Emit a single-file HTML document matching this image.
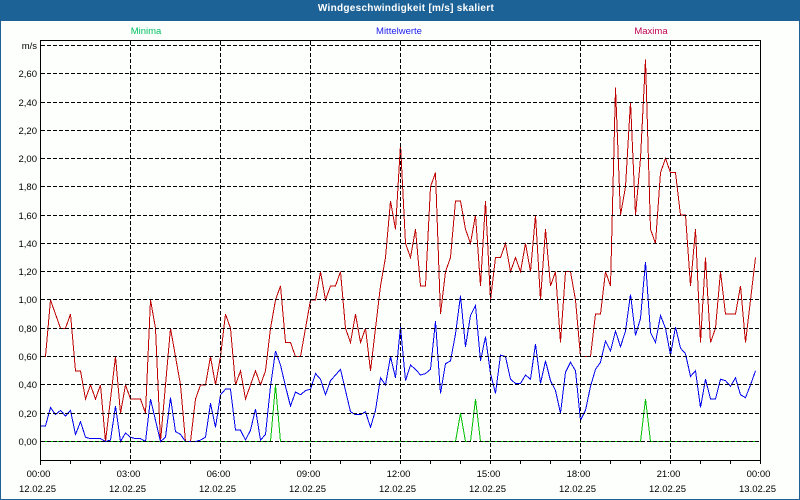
<!DOCTYPE html>
<html><head><meta charset="utf-8"><style>
html,body{margin:0;padding:0;background:#fdfffd;width:800px;height:500px;overflow:hidden}
svg{display:block;position:absolute;left:0;top:0}
text{font-family:"Liberation Sans",sans-serif;font-size:9.5px;fill:#000}
.r{text-anchor:end}.m{text-anchor:middle}
.t{font-size:10px;font-weight:bold;fill:#fff;text-anchor:middle;letter-spacing:.28px}
.d{fill:none;stroke-width:1;vector-effect:non-scaling-stroke}
</style></head><body>
<svg width="800" height="500" viewBox="0 0 800 500">
<rect x="0" y="0" width="800" height="500" fill="#1c6297"/>
<rect x="1" y="21" width="798" height="478" fill="#fdfffd"/>
<text class="t" x="406" y="11">Windgeschwindigkeit [m/s] skaliert</text>
<text class="m" x="146" y="34" style="fill:#00c060">Minima</text>
<text class="m" x="399" y="34" style="fill:#2020f0">Mittelwerte</text>
<text class="m" x="651" y="34" style="fill:#c00050">Maxima</text>
<g shape-rendering="crispEdges">
<g transform="translate(0.5,441.5) scale(1,-1.415)">
<polyline class="d" stroke="#00c000" points="40,0 270,0 275,40 280,0 455,0 460,20 465,0 470,0 475,30 480,0 640,0 645,30 650,0 755,0"/>
<polyline class="d" stroke="#c00000" points="40,60 45,60 50,100 55,90 60,80 65,80 70,90 75,50 80,50 85,30 90,40 95,30 100,40 105,0 110,30 115,60 120,20 125,40 130,30 135,30 140,30 145,20 150,100 155,80 160,0 165,40 170,80 175,60 180,40 185,0 190,0 195,30 200,40 205,40 210,60 215,40 220,60 225,90 230,80 235,40 240,50 245,30 250,40 255,50 260,40 265,50 270,80 275,100 280,110 285,70 290,70 295,60 300,60 305,80 310,100 315,100 320,120 325,100 330,110 335,110 340,120 345,80 350,70 355,90 360,70 365,80 370,50 375,80 380,110 385,130 390,170 395,150 400,210 405,140 410,130 415,150 420,110 425,110 430,180 435,190 440,90 445,120 450,130 455,170 460,170 465,150 470,140 475,160 480,110 485,170 490,100 495,130 500,130 505,140 510,120 515,130 520,120 525,140 530,120 535,160 540,100 545,150 550,110 555,120 560,70 565,120 570,120 575,100 580,60 585,60 590,60 595,90 600,90 605,120 610,110 615,250 620,160 625,180 630,240 635,160 640,200 645,270 650,150 655,140 660,190 665,200 670,190 675,190 680,160 685,160 690,110 695,150 700,70 705,130 710,70 715,80 720,120 725,90 730,90 735,90 740,110 745,70 750,100 755,130"/>
<polyline class="d" stroke="#0000f0" points="40,11 45,11 50,24 55,19 60,22 65,18 70,22 75,5 80,14 85,3 90,2 95,2 100,2 105,0 110,1 115,25 120,0 125,6 130,3 135,2 140,2 145,0 150,30 155,15 160,0 165,3 170,31 175,7 180,5 185,0 190,0 195,0 200,1 205,3 210,27 215,10 220,33 225,37 230,37 235,8 240,8 245,1 250,8 255,23 260,1 265,5 270,39 275,64 280,54 285,39 290,25 295,35 300,33 305,36 310,37 315,48 320,44 325,33 330,43 335,47 340,51 345,36 350,21 355,19 360,19 365,21 370,10 375,22 380,45 385,40 390,60 395,45 400,81 405,43 410,54 415,51 420,47 425,48 430,51 435,85 440,34 445,55 450,57 455,76 460,103 465,67 470,89 475,96 480,57 485,74 490,48 495,34 500,61 505,60 510,44 515,41 520,41 525,47 530,44 535,69 540,41 545,57 550,43 555,36 560,20 565,49 570,56 575,50 580,15 585,22 590,39 595,51 600,56 605,71 610,64 615,78 620,67 625,78 630,104 635,75 640,87 645,127 650,77 655,70 660,89 665,80 670,61 675,81 680,66 685,62 690,46 695,50 700,24 705,44 710,30 715,30 720,44 725,43 730,39 735,45 740,33 745,31 750,40 755,50"/>
</g>
<path fill="none" stroke="#000" stroke-width="1" stroke-dasharray="4 2" d="M41 45.5H760M41 73.5H760M41 102.5H760M41 130.5H760M41 158.5H760M41 186.5H760M41 215.5H760M41 243.5H760M41 271.5H760M41 299.5H760M41 328.5H760M41 356.5H760M41 384.5H760M41 413.5H760M41 441.5H760"/>
<path fill="none" stroke="#000" stroke-width="1" stroke-dasharray="4 2" d="M130.5 41V460M220.5 41V460M310.5 41V460M400.5 41V460M490.5 41V460M580.5 41V460M670.5 41V460"/>
<path fill="none" stroke="#000" stroke-width="1" d="M40.5 40.5H760.5V460.5H40.5ZM40.5 460V465M70.5 460V464M100.5 460V464M130.5 460V464M160.5 460V464M190.5 460V464M220.5 460V464M250.5 460V464M280.5 460V464M310.5 460V464M340.5 460V464M370.5 460V464M400.5 460V464M430.5 460V464M460.5 460V464M490.5 460V464M520.5 460V464M550.5 460V464M580.5 460V464M610.5 460V464M640.5 460V464M670.5 460V464M700.5 460V464M730.5 460V464M760.5 460V464"/>
</g>
<g>
<text class="r" x="37" y="49">m/s</text>
<text class="r" x="37" y="77">2,60</text>
<text class="r" x="37" y="106">2,40</text>
<text class="r" x="37" y="134">2,20</text>
<text class="r" x="37" y="162">2,00</text>
<text class="r" x="37" y="190">1,80</text>
<text class="r" x="37" y="219">1,60</text>
<text class="r" x="37" y="247">1,40</text>
<text class="r" x="37" y="275">1,20</text>
<text class="r" x="37" y="303">1,00</text>
<text class="r" x="37" y="332">0,80</text>
<text class="r" x="37" y="360">0,60</text>
<text class="r" x="37" y="388">0,40</text>
<text class="r" x="37" y="417">0,20</text>
<text class="r" x="37" y="445">0,00</text>
</g>
<g>
<text class="m" x="38.5" y="477">00:00</text><text class="m" x="37.5" y="492">12.02.25</text>
<text class="m" x="128.5" y="477">03:00</text><text class="m" x="127.5" y="492">12.02.25</text>
<text class="m" x="218.5" y="477">06:00</text><text class="m" x="217.5" y="492">12.02.25</text>
<text class="m" x="308.5" y="477">09:00</text><text class="m" x="307.5" y="492">12.02.25</text>
<text class="m" x="398.5" y="477">12:00</text><text class="m" x="397.5" y="492">12.02.25</text>
<text class="m" x="488.5" y="477">15:00</text><text class="m" x="487.5" y="492">12.02.25</text>
<text class="m" x="578.5" y="477">18:00</text><text class="m" x="577.5" y="492">12.02.25</text>
<text class="m" x="668.5" y="477">21:00</text><text class="m" x="667.5" y="492">12.02.25</text>
<text class="m" x="758.5" y="477">00:00</text><text class="m" x="757.5" y="492">13.02.25</text>
</g>
</svg>
</body></html>
